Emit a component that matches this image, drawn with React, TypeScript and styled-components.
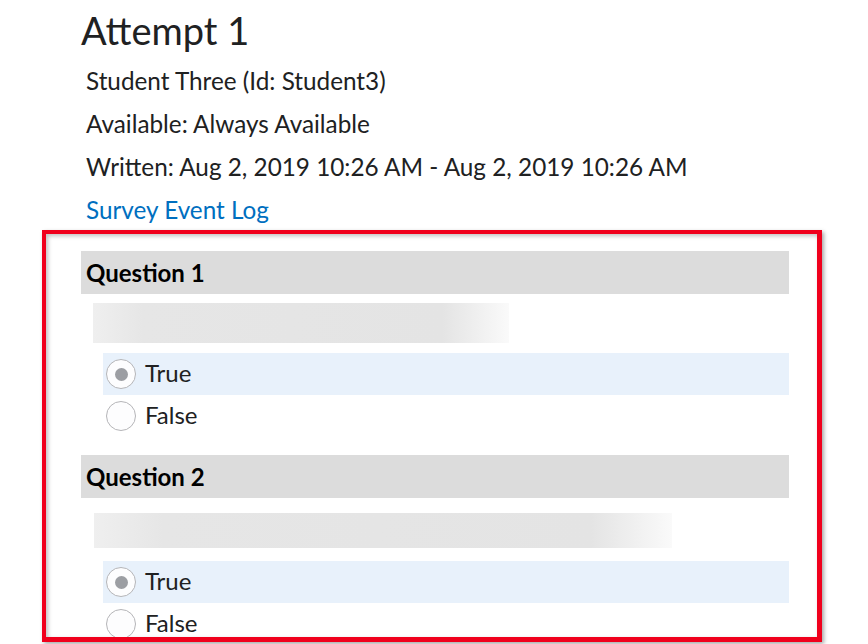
import React from "react";
import styled, { createGlobalStyle } from "styled-components";

const Global = createGlobalStyle`
  html, body { margin: 0; padding: 0; background: #ffffff; }
  body { font-family: Lato, "Noto Sans", sans-serif; color: #202122; }
`;

const Page = styled.div`
  width: 868px;
  height: 644px;
  overflow: hidden;
  box-sizing: border-box;
  padding-top: 4px;
`;

const Header = styled.header`
  padding-left: 81px;
`;

const Title = styled.h1`
  margin: 0;
  font-size: 38px;
  font-weight: 400;
  line-height: 52px;
  color: #202122;
`;

const InfoList = styled.div`
  padding-top: 3px;
`;

const InfoLine = styled.div`
  margin-left: 5px;
  font-size: 24.3px;
  line-height: 43px;
  color: #202122;
`;

const Link = styled.a`
  color: #006fbf;
  text-decoration: none;
  cursor: pointer;
`;

const Frame = styled.section`
  margin: -1px 0 0 42px;
  width: 780px;
  height: 412px;
  box-sizing: border-box;
  border: 5px solid #f0001c;
  border-left-width: 4px;
  border-top-width: 4px;
  box-shadow: 2px 2px 4px rgba(0, 0, 0, 0.35), inset 2px 2px 4px rgba(0, 0, 0, 0.25);
  padding: 17px 28px 0 35px;
  overflow: hidden;
`;

const Question = styled.div<{ $gap: number }>`
  margin-top: ${(p) => p.$gap}px;
`;

const QHead = styled.div`
  height: 43px;
  background: #dcdcdc;
  padding-left: 5px;
  display: flex;
  align-items: center;
  font-size: 24px;
  font-weight: 700;
  color: #000;
`;

const Blur = styled.div<{ $w: number; $h: number; $top: number; $left: number; $fade: number }>`
  margin: ${(p) => p.$top}px 0 0 ${(p) => p.$left}px;
  width: ${(p) => p.$w}px;
  height: ${(p) => p.$h}px;
  background: linear-gradient(
    90deg,
    #efefef 0%,
    #e6e6e6 12%,
    #e4e4e4 ${(p) => p.$fade}%,
    #fafafa 100%
  );
`;

const Options = styled.div<{ $top: number }>`
  margin: ${(p) => p.$top}px 0 0 22px;
  display: flex;
  flex-direction: column;
`;

const Option = styled.label<{ $selected?: boolean }>`
  height: 42px;
  display: flex;
  align-items: center;
  gap: 9px;
  padding-left: 3px;
  background: ${(p) => (p.$selected ? "#e8f1fb" : "transparent")};
  font-size: 24px;
  color: #202122;
`;

const OptionText = styled.span`
  padding-bottom: 4px;
`;

const Radio = styled.span<{ $checked?: boolean }>`
  width: 30px;
  height: 30px;
  box-sizing: border-box;
  border-radius: 50%;
  border: 1px solid #b5b5b8;
  background: #fdfdfe;
  display: flex;
  align-items: center;
  justify-content: center;
  flex: none;
  &::after {
    content: "";
    display: ${(p) => (p.$checked ? "block" : "none")};
    width: 13px;
    height: 13px;
    border-radius: 50%;
    background: #9c9ea3;
  }
`;

type Q = { title: string; blur: { w: number; h: number; top: number; left: number; fade: number }; optTop: number; gap: number };

const questions: Q[] = [
  { title: "Question 1", blur: { w: 416, h: 40, top: 9, left: 12, fade: 84 }, optTop: 10, gap: 0 },
  { title: "Question 2", blur: { w: 578, h: 35, top: 15, left: 13, fade: 86 }, optTop: 13, gap: 18 },
];

export default function App() {
  return (
    <Page>
      <Global />
      <Header>
        <Title>Attempt 1</Title>
        <InfoList>
          <InfoLine>Student Three (Id: Student3)</InfoLine>
          <InfoLine>Available: Always Available</InfoLine>
          <InfoLine>Written: Aug 2, 2019 10:26 AM - Aug 2, 2019 10:26 AM</InfoLine>
          <InfoLine>
            <Link>Survey Event Log</Link>
          </InfoLine>
        </InfoList>
      </Header>
      <Frame>
        {questions.map((q) => (
          <Question key={q.title} $gap={q.gap}>
            <QHead>{q.title}</QHead>
            <Blur {...{ $w: q.blur.w, $h: q.blur.h, $top: q.blur.top, $left: q.blur.left, $fade: q.blur.fade }} />
            <Options $top={q.optTop}>
              <Option $selected>
                <Radio $checked />
                <OptionText>True</OptionText>
              </Option>
              <Option>
                <Radio />
                <OptionText>False</OptionText>
              </Option>
            </Options>
          </Question>
        ))}
      </Frame>
    </Page>
  );
}
